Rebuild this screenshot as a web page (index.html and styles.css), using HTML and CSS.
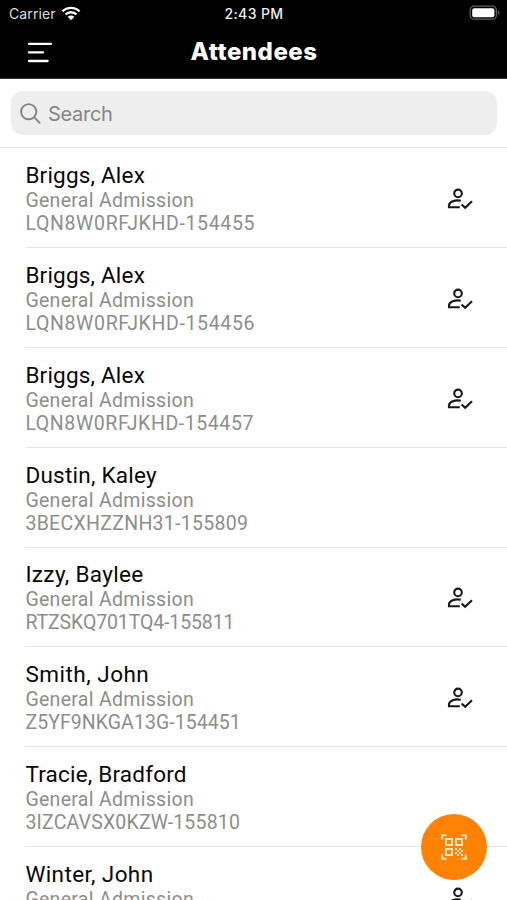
FILE: index.html
```html
<!DOCTYPE html>
<html lang="en">
<head>
<meta charset="utf-8">
<title>Attendees</title>
<link rel="stylesheet" href="styles.css">
</head>
<body>
<svg class="defs" aria-hidden="true">
  <symbol id="checked" viewBox="0 0 28 24">
    <circle cx="12" cy="6.4" r="3.8"/>
    <path d="M14.8 13.7C9 12.6 3 14.8 3 18.4V20.2H13.8M15.6 17.4l3.5 3.4 6.9-6.6"/>
  </symbol>
</svg>
<div class="app">
  <header class="header">
    <div class="status">
      <div class="carrier"><span>Carrier</span>
        <svg class="wifi" width="20" height="15" viewBox="0 0 20 15"><path d="M1.5 5.4a12 12 0 0 1 17 0M4.5 8.5a7.8 7.8 0 0 1 11 0" fill="none" stroke="#fff" stroke-width="2.3"/><path d="M6.7 10.8a4.7 4.7 0 0 1 6.6 0L10 14.2z" fill="#fff"/></svg>
      </div>
      <span class="time">2:43 PM</span>
      <svg class="battery" width="32" height="16" viewBox="0 0 32 16"><rect x="1.2" y="1.2" width="26.2" height="13" rx="4" fill="none" stroke="#636363" stroke-width="1.3"/><rect x="3.2" y="3.2" width="22.2" height="9" rx="2" fill="#fff"/><path d="M29 5.2q3 2.5 0 5z" fill="#636363"/></svg>
    </div>
    <div class="navbar">
      <svg class="menu" width="26" height="22" viewBox="0 0 26 22"><path d="M2 1.8h22M2 10.4h14M2 19h18.6" stroke="#fff" stroke-width="2.3" stroke-linecap="round"/></svg>
      <h1 class="title">Attendees</h1>
    </div>
  </header>
  <div class="search-area">
    <div class="search">
      <svg width="22" height="22" viewBox="0 0 22 22"><circle cx="8.7" cy="8.7" r="7.6"/><path d="M14.2 14.2l5.4 5.6"/></svg>
      <span>Search</span>
    </div>
  </div>
  <main class="list">
    <article class="row"><div><h2 class="name n1">Briggs, Alex</h2><p class="type">General Admission</p><p class="code c1">LQN8W0RFJKHD-154455</p></div><svg class="check"><use href="#checked"/></svg></article>
    <article class="row"><div><h2 class="name n1">Briggs, Alex</h2><p class="type">General Admission</p><p class="code c1">LQN8W0RFJKHD-154456</p></div><svg class="check"><use href="#checked"/></svg></article>
    <article class="row"><div><h2 class="name n1">Briggs, Alex</h2><p class="type">General Admission</p><p class="code c3">LQN8W0RFJKHD-154457</p></div><svg class="check"><use href="#checked"/></svg></article>
    <article class="row"><div><h2 class="name n4">Dustin, Kaley</h2><p class="type">General Admission</p><p class="code c4">3BECXHZZNH31-155809</p></div></article>
    <article class="row"><div><h2 class="name n5">Izzy, Baylee</h2><p class="type">General Admission</p><p class="code c5">RTZSKQ701TQ4-155811</p></div><svg class="check"><use href="#checked"/></svg></article>
    <article class="row"><div><h2 class="name n6">Smith, John</h2><p class="type">General Admission</p><p class="code c6">Z5YF9NKGA13G-154451</p></div><svg class="check"><use href="#checked"/></svg></article>
    <article class="row"><div><h2 class="name n7">Tracie, Bradford</h2><p class="type">General Admission</p><p class="code c7">3IZCAVSX0KZW-155810</p></div></article>
    <article class="row"><div><h2 class="name n8">Winter, John</h2><p class="type">General Admission</p></div><svg class="check"><use href="#checked"/></svg></article>
  </main>
  <button class="scan" aria-label="Scan">
    <svg width="26" height="26" viewBox="0 0 26 26"><path d="M1.2 5.5V1.2h4.3M20.5 1.2h4.3v4.3M24.8 20.5v4.3h-4.3M5.5 24.8H1.2v-4.3" stroke-width="2"/><path d="M5 5h6v6H5zM15 5h6v6h-6zM5 15h6v6H5z" stroke-width="1.9"/><path d="M14 14h2v2h-2zM18 14h2v2h-2zM16 16h2v2h-2zM20 16h2v2h-2zM14 18h2v2h-2zM18 18h2v2h-2zM16 20h2v2h-2zM20 20h2v2h-2z" class="dots"/></svg>
  </button>
</div>
</body>
</html>
```
FILE: styles.css
```css
* { box-sizing: border-box; }
body, h1, h2, p { margin: 0; }
body { background: #fff; overflow: hidden; font-family: Roboto, sans-serif; }
.defs { position: absolute; width: 0; height: 0; }
.app { height: 900px; overflow: hidden; }
.header { height: 79px; background: #000; color: #fff; border-bottom: 1px solid #333; }
.status { height: 28px; display: grid; grid-template-columns: 1fr auto 1fr; align-items: center; padding: 0 6px 0 9px; font: 14px/28px Inter, sans-serif; }
.carrier { display: flex; align-items: center; gap: 5px; color: #ddd; letter-spacing: .1px; }
.wifi { margin-top: -2px; }
.time { margin-left: -2px; font-weight: 500; font-size: 14px; letter-spacing: .4px; color: #eee; }
.battery { justify-self: end; margin-top: -2px; }
.navbar { height: 50px; display: grid; grid-template-columns: 80px 1fr 80px; align-items: center; }
.menu { margin-left: 27px; }
.title { text-align: center; font: 800 24px/48px Inter, sans-serif; letter-spacing: .5px; margin-top: -3px; padding-left: 1px; }
.search-area { height: 69px; padding: 12px 10px 0 11px; border-bottom: 1px solid #e4e4e4; }
.search { height: 44px; border-radius: 12px; background: #eee; display: flex; align-items: center; gap: 6px; padding-left: 9px; color: #858585; font: 20px/46px Inter, sans-serif; letter-spacing: -.3px; }
.search span { padding-top: 1px; }
.search svg { margin-top: 2px; fill: none; stroke: #858585; stroke-width: 1.9; stroke-linecap: round; }
.list { display: flex; flex-direction: column; }
.row { height: 99.8px; flex: none; margin-left: 25.4px; padding: 13.8px 33px 0 0; border-bottom: 1px solid #e6e6e6; display: flex; justify-content: space-between; white-space: nowrap; }
.row:first-child { height: 100.2px; }
.name { font-size: 22.5px; line-height: 27px; font-weight: 400; color: #080808; }
.type, .code { color: #8d8d8d; }
.type { font-size: 19.5px; line-height: 23px; letter-spacing: .3px; }
.code { font-size: 19.5px; line-height: 24px; }
.n1 { letter-spacing: .2px; }
.n4 { letter-spacing: .25px; }
.n5 { letter-spacing: .35px; }
.n6 { letter-spacing: .5px; }
.n7 { letter-spacing: .2px; }
.n8 { letter-spacing: .38px; }
.c1 { letter-spacing: .64px; }
.c3 { letter-spacing: .58px; }
.c4 { letter-spacing: .3px; }
.c5 { letter-spacing: -.12px; }
.c6 { letter-spacing: .06px; }
.c7 { letter-spacing: .18px; }
.check { width: 28px; height: 24px; margin-top: 25px; fill: none; stroke: #171717; stroke-width: 2.1; }
.scan { position: absolute; left: 421px; top: 814px; width: 66px; height: 66px; padding: 0; border: 0; border-radius: 50%; background: #ff8205; display: flex; align-items: center; justify-content: center; }
.scan svg { fill: none; stroke: #ffe5bc; }
.scan .dots { fill: #ffe5bc; stroke: none; }
```
